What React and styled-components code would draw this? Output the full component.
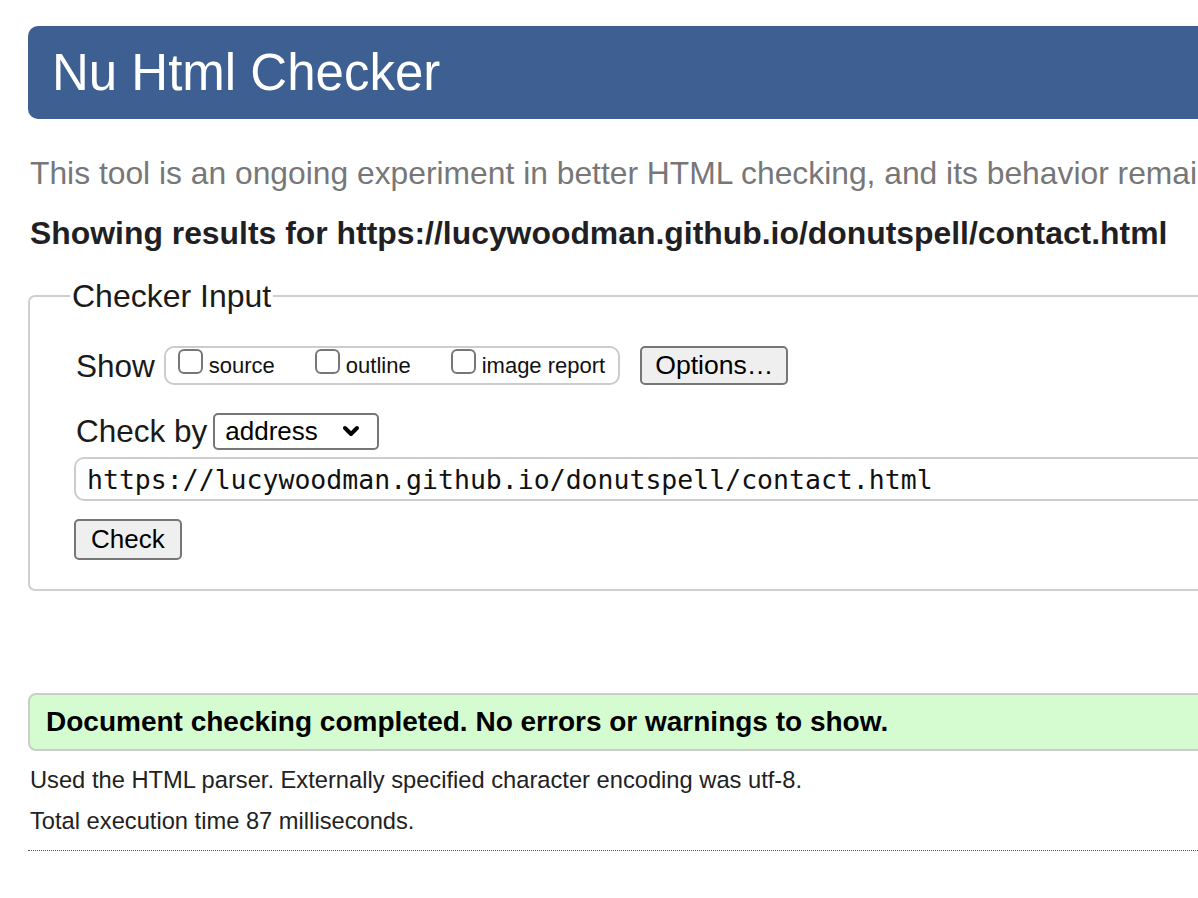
import React from 'react';
import styled, { createGlobalStyle } from 'styled-components';
import { ChevronDown } from 'lucide-react';

const GlobalStyle = createGlobalStyle`
  html, body {
    margin: 0;
    padding: 0;
    overflow: hidden;
    background: #fff;
  }
  body {
    font-family: "Liberation Sans", Arial, Helvetica, sans-serif;
    color: #222;
  }
`;

const Page = styled.div`
  width: 1420px;
  padding: 26px 0 40px 28px;
`;

const Header = styled.header`
  height: 93px;
  display: flex;
  align-items: center;
  padding-left: 24px;
  background: #3e5f92;
  border-radius: 10px;
`;

const Title = styled.h1`
  margin: 0;
  font-size: 51px;
  font-weight: normal;
  color: #fff;
  line-height: 1;
`;

const Intro = styled.p`
  margin: 35px 0 0 2px;
  font-size: 31.8px;
  line-height: 38px;
  color: #777;
  white-space: nowrap;
`;

const Showing = styled.h2`
  margin: 22px 0 0 2px;
  font-size: 31.9px;
  line-height: 38px;
  font-weight: bold;
  color: #1f1f24;
  white-space: nowrap;
`;

const Fieldset = styled.fieldset`
  margin: 25px 0 0 0;
  padding: 0 0 29px 44px;
  border: 2px solid #cfcfcf;
  border-radius: 7px;
  min-inline-size: auto;
`;

const Legend = styled.legend`
  margin-left: -4px;
  padding: 0 2px;
  font-size: 32px;
  line-height: 38px;
  color: #1a1a1a;
`;

const Row = styled.div`
  display: flex;
  align-items: center;
  margin-top: ${(p) => p.$top || 0}px;
`;

const Label = styled.span`
  font-size: 31.5px;
  line-height: 38px;
  color: #1a1a1a;
  margin-left: 2px;
  margin-right: ${(p) => p.$gap || 0}px;
`;

const Group = styled.div`
  height: 35px;
  display: flex;
  align-items: center;
  gap: 40px;
  padding: 0 13px 0 12px;
  border: 2px solid #cccccc;
  border-radius: 10px;
`;

const Option = styled.label`
  display: inline-flex;
  align-items: center;
  gap: 6px;
  font-size: 22px;
  color: #111;
`;

const Box = styled.input.attrs({ type: 'checkbox' })`
  appearance: none;
  margin: 0 0 8px 0;
  width: 25px;
  height: 25px;
  border: 2px solid #777;
  border-radius: 6px;
  background: #fff;
`;

const Button = styled.button`
  margin-left: ${(p) => p.$left || 0}px;
  height: ${(p) => p.$h || 39}px;
  padding: 0 ${(p) => p.$pad || 14}px;
  font-family: "Liberation Sans", Arial, sans-serif;
  font-size: ${(p) => p.$size || 26}px;
  color: #000;
  background: #efefef;
  border: 2px solid #767676;
  border-radius: 5px;
`;

const Select = styled.div`
  width: 166px;
  height: 37px;
  box-sizing: border-box;
  display: flex;
  align-items: center;
  justify-content: space-between;
  padding: 0 14px 0 10px;
  font-size: 26px;
  color: #000;
  border: 2px solid #767676;
  border-radius: 5px;
`;

const UrlInput = styled.div`
  margin-top: 7px;
  height: 44px;
  box-sizing: border-box;
  display: flex;
  align-items: center;
  padding-left: 11px;
  font-family: "DejaVu Sans Mono", Menlo, monospace;
  font-size: 26.5px;
  color: #111;
  border: 2px solid #cccccc;
  border-right: none;
  border-radius: 10px 0 0 10px;
`;

const Success = styled.div`
  margin-top: 102px;
  height: 58px;
  box-sizing: border-box;
  display: flex;
  align-items: center;
  padding-left: 16px;
  background: #d5fcd1;
  border: 2px solid #cccccc;
  border-radius: 8px;
  font-size: 28px;
  font-weight: bold;
  color: #000;
`;

const Info = styled.p`
  margin: ${(p) => p.$top}px 0 0 2px;
  font-size: 23.7px;
  line-height: 29px;
  color: #222;
`;

const Rule = styled.hr`
  margin: 14px 0 0 0;
  border: none;
  border-top: 1px dotted #555;
`;

export default function App() {
  return (
    <>
      <GlobalStyle />
      <Page>
        <Header>
          <Title>Nu Html Checker</Title>
        </Header>

        <Intro>
          This tool is an ongoing experiment in better HTML checking, and its behavior remains subject to change
        </Intro>
        <Showing>Showing results for https://lucywoodman.github.io/donutspell/contact.html</Showing>

        <Fieldset>
          <Legend>Checker Input</Legend>

          <Row $top={31}>
            <Label $gap={9}>Show</Label>
            <Group>
              <Option><Box />source</Option>
              <Option><Box />outline</Option>
              <Option><Box />image report</Option>
            </Group>
            <Button $left={20} $size={26.6} $pad={13}>Options…</Button>
          </Row>

          <Row $top={27}>
            <Label $gap={6}>Check by</Label>
            <Select>
              <span>address</span>
              <ChevronDown size={24} strokeWidth={4} color="#000" />
            </Select>
          </Row>

          <UrlInput>https://lucywoodman.github.io/donutspell/contact.html</UrlInput>

          <Row $top={18}>
            <Button $h={41} $size={26} $pad={15}>Check</Button>
          </Row>
        </Fieldset>

        <Success>Document checking completed. No errors or warnings to show.</Success>
        <Info $top={15}>Used the HTML parser. Externally specified character encoding was utf-8.</Info>
        <Info $top={12}>Total execution time 87 milliseconds.</Info>
        <Rule />
      </Page>
    </>
  );
}
